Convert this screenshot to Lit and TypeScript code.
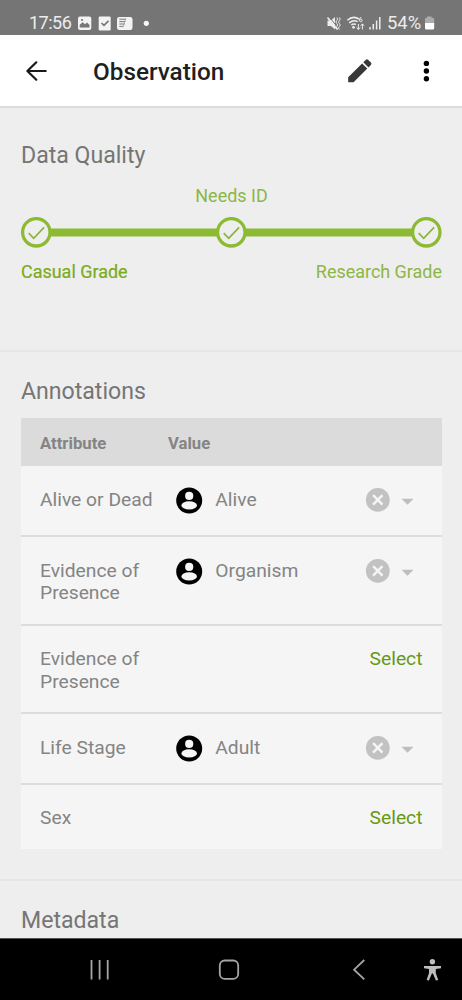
import { LitElement, html, css, svg, nothing } from "lit";
import { customElement } from "lit/decorators.js";

interface Annotation {
  attribute: string;
  value?: string;
  height: number;
}

const annotations: Annotation[] = [
  { attribute: "Alive or Dead", value: "Alive", height: 71 },
  { attribute: "Evidence of Presence", value: "Organism", height: 88.5 },
  { attribute: "Evidence of Presence", height: 88.5 },
  { attribute: "Life Stage", value: "Adult", height: 70.5 },
  { attribute: "Sex", height: 64.5 },
];

const step = (cx: number) => svg`
  <circle cx=${cx} cy="15.3" r="13.7" fill="#eee" stroke="#8cbb33" stroke-width="3.3"></circle>
  <path d="M${cx - 7.6} 16.2l5 5.1L${cx + 7.8} 10.3" fill="none" stroke="#8cb33d" stroke-width="1.7"></path>`;

@customElement("status-bar")
class StatusBar extends LitElement {
  static styles = css`
    :host { display: flex; height: 35px; background: #757575; color: #ececec; box-sizing: border-box;
      padding: 11px 26px 0 29px; justify-content: space-between; font-size: 18px; line-height: 24px; }
    .group { display: flex; }
    .left-icons { margin-left: 4px; }
    .time { letter-spacing: -0.5px; white-space: nowrap; width: 44px; }
    .battery { margin-left: 5px; width: 36px; font-size: 18.4px; white-space: nowrap; }
    svg { display: block; flex: none; }
  `;
  render() {
    return html`
      <div class="group">
        <span class="time">17:56</span>
        <svg class="left-icons" width="75" height="24" viewBox="77 11 75 24">
          <rect x="78" y="16.5" width="13.3" height="13.5" rx="2" fill="#f3f3f3"></rect>
          <path d="M79.7 27.5v-2.8l3-2.5 2.3 2 2-1.6 2.5 2.4v2.5z" fill="#777"></path>
          <circle cx="82" cy="20" r="1.1" fill="#777"></circle>
          <rect x="98.7" y="16.5" width="12" height="14" rx="1.2" fill="#f3f3f3"></rect>
          <path d="M101.5 23l2.5 2.4 4.5-4.5" fill="none" stroke="#777" stroke-width="1.7"></path>
          <rect x="117" y="17" width="15.5" height="13" rx="2.3" fill="#f3f3f3"></rect>
          <path d="M119.3 19.2h6.5M119.3 21.6h5.8M119.3 24h5M119.3 26.4h3.5" stroke="#777" stroke-width="1"></path>
          <path d="M125.8 18.5l-2.7 8.7" stroke="#999" stroke-width=".8"></path>
          <circle cx="146.3" cy="23.3" r="2.6" fill="#f6f6f6"></circle>
        </svg>
      </div>
      <div class="group">
        <svg width="56" height="24" viewBox="326 11 56 24" fill="none" stroke="#ededed">
          <path d="M327.5 20.5h3.5l4-3.5v12.5l-4-3.5h-3.5z" fill="#ededed" stroke="none"></path>
          <path d="M329.5 17.2l9 11.3" stroke="#757575" stroke-width="1"></path>
          <path d="M327.5 17.5l10.2 12" stroke-width="1.6"></path>
          <path d="M336.8 17.5q1.8 1.5 0 3t0 3 0 3 0 3M339.4 17.5q1.8 1.5 0 3t0 3 0 3 0 3" stroke-width="1"></path>
          <path d="M347.3 20.2q5.8-5 11.8-1.2M349.2 22.8q4.4-3.5 8.4-1.2M351.3 25q2.2-1.8 4.6-.5" stroke-width="1.5"></path>
          <circle cx="353.5" cy="27.3" r="1.4" fill="#ededed" stroke="none"></circle>
          <path d="M361.2 17q-2 1.7-1.6 3.4" stroke-width="1"></path>
          <circle cx="360.8" cy="20.4" r="1.3" stroke-width="1"></circle>
          <path d="M358.4 24v5.3M356.7 27.5l1.7 2 1.7-2M362.4 29.5V24M360.7 25.8l1.7-2 1.7 2" stroke-width="1"></path>
          <path d="M370 27v2.5M373.3 24v5.5M376.6 20.5v9" stroke-width="1.5"></path>
          <path d="M379.8 17v12.5" stroke-width="1.5"></path>
        </svg>
        <span class="battery">54%</span>
        <svg width="13" height="24" viewBox="423 11 13 24">
          <path d="M427 16.5h4.5v1.3h1.2q1.5 0 1.5 1.5V23H425v-3.7q0-1.5 1.5-1.5h.5z" fill="#acacac"></path>
          <path d="M425 23h9.2v5q0 1.5-1.5 1.5h-6.2q-1.5 0-1.5-1.5z" fill="#fff"></path>
        </svg>
      </div>`;
  }
}

@customElement("title-bar")
class TitleBar extends LitElement {
  static styles = css`
    :host { display: grid; grid-template-columns: 93px 1fr 73px 42px; align-items: center; height: 73px;
      box-sizing: border-box; background: #fff; border-bottom: 2px solid #dcdcdc; }
    .back { margin-left: 26px; }
    .title { font-size: 24.3px; font-weight: 500; color: #1f1f1f; line-height: 28px; padding-top: 3px; }
    svg { display: block; }
  `;
  render() {
    return html`
      <svg class="back" width="22" height="22" viewBox="26 60 22 22" fill="none" stroke="#191919" stroke-width="2.2" stroke-linecap="round" stroke-linejoin="round">
        <path d="M45.7 71H27.8M36.3 62.3L27.4 71l8.9 8.7"></path>
      </svg>
      <span class="title">Observation</span>
      <svg width="26" height="26" viewBox="347 58 26 26" fill="#383838">
        <path d="M348.2 82.3v-5L362.1 63.4l5.2 5.2-13.7 13.7z"></path>
        <path d="M363.3 62.2l2.3-2.3q1.3-1.3 2.7 0l2.6 2.6q1.2 1.3 0 2.5l-2.4 2.4z"></path>
      </svg>
      <svg width="12" height="24" viewBox="420.2 59 12 24" fill="#000">
        <circle cx="426.6" cy="63.4" r="2.7"></circle><circle cx="426.6" cy="71" r="2.7"></circle><circle cx="426.6" cy="78.8" r="2.7"></circle>
      </svg>`;
  }
}

@customElement("data-quality")
class DataQuality extends LitElement {
  static styles = css`
    :host { display: block; height: 244px; box-sizing: border-box; padding: 34px 20px 0 21px; border-bottom: 2px solid #e6e6e6; }
    .heading { font-size: 23.1px; line-height: 27px; color: #757575; }
    .needs { font-size: 17.97px; line-height: 23px; text-align: center; color: #8cb645; margin-top: 15px; }
    .track { display: block; margin-top: 10px; }
    .grades { display: flex; justify-content: space-between; margin-top: 12px; font-size: 17.97px; line-height: 23px; color: #8cb645; }
    .current { color: #7aac18; -webkit-text-stroke: .2px #7aac18; }
  `;
  render() {
    return html`
      <div class="heading">Data Quality</div>
      <div class="needs">Needs ID</div>
      <svg class="track" width="421" height="31" viewBox="0 0 421 31">
        <path d="M15 15.5h391" stroke="#8cbb33" stroke-width="8"></path>
        ${step(15.3)}${step(210.3)}${step(405.3)}
      </svg>
      <div class="grades"><span class="current">Casual Grade</span><span>Research Grade</span></div>`;
  }
}

@customElement("annotation-table")
class AnnotationTable extends LitElement {
  static styles = css`
    :host { display: block; height: 529px; box-sizing: border-box; padding: 26px 20px 0 21px; border-bottom: 2px solid #e6e6e6; }
    .heading { font-size: 23.1px; line-height: 27px; color: #757575; }
    .table { margin-top: 13px; background: #f5f5f5; color: #848484; font-size: 19.25px; line-height: 22.7px; }
    .head, .row { display: grid; grid-template-columns: 127px 1fr auto; padding-left: 19px; box-sizing: border-box; }
    .head { height: 48px; background: #dbdbdb; align-items: center; font-size: 16.7px; font-weight: 700; color: #848484; padding-top: 4px; }
    .head span + span { padding-left: 1px; }
    .row { padding-top: 22.6px; border-bottom: 2px solid #dcdcdc; }
    .row:last-child { border-bottom: 0; }
    .value { display: flex; padding-left: 7.3px; gap: 12px; }
    .user { margin-top: -2.6px; }
    .select { color: #669914; padding-right: 19.5px; }
    .actions { margin: -0.9px 28px 0 0; }
    svg { display: block; }
  `;
  row(a: Annotation) {
    return html`<div class="row" style="height:${a.height}px">
      <div>${a.attribute}</div>
      <div class="value">${a.value
        ? html`<svg class="user" width="29" height="29" viewBox="0 0 29 29">
              <circle cx="15.2" cy="14.5" r="13" fill="#000"></circle>
              <circle cx="15.2" cy="9.9" r="4.1" fill="#f5f5f5"></circle>
              <ellipse cx="15.2" cy="19.4" rx="7.8" ry="4.2" fill="#f5f5f5"></ellipse>
            </svg><span>${a.value}</span>`
        : nothing}</div>
      ${a.value
        ? html`<svg class="actions" width="49" height="24" viewBox="0 0 49 24">
              <circle cx="12.8" cy="11.9" r="11.9" fill="#c2c2c2"></circle>
              <path d="M8.1 7.2l9.4 9.4M17.5 7.2l-9.4 9.4" stroke="#f5f5f5" stroke-width="2.5"></path>
              <path d="M36.5 10.7h12l-6 6z" fill="#bebebe"></path>
            </svg>`
        : html`<span class="select">Select</span>`}
    </div>`;
  }
  render() {
    return html`
      <div class="heading">Annotations</div>
      <div class="table">
        <div class="head"><span>Attribute</span><span>Value</span></div>
        ${annotations.map((a) => this.row(a))}
      </div>`;
  }
}

@customElement("nav-bar")
class NavBar extends LitElement {
  static styles = css`
    :host { display: block; height: 62px; background: #000; border-top: 1px solid #555; box-sizing: border-box; }
    svg { display: block; }
  `;
  render() {
    return html`<svg width="462" height="61" viewBox="0 939 462 61" fill="none" stroke="#a6a6a6">
      <path d="M91.5 960v19.5M99.6 960v19.5M107.7 960v19.5" stroke-width="1.8"></path>
      <rect x="219.8" y="960.5" width="18.4" height="18.4" rx="5" stroke-width="1.8"></rect>
      <path d="M364.3 960l-10.2 9.7 10.2 9.7" stroke-width="1.8"></path>
      <g fill="#bdbdbd" stroke="none">
        <circle cx="432.4" cy="961.8" r="2.7"></circle>
        <path d="M424 966h17v2.2l-5.2.7v4l2.4 7.2-2.3.5-3-7h-1l-3 7-2.3-.5 2.4-7.2v-4l-5-.7z"></path>
      </g>
    </svg>`;
  }
}

@customElement("app-root")
class AppRoot extends LitElement {
  static styles = css`
    :host { display: flex; flex-direction: column; width: 462px; height: 1000px; overflow: hidden;
      background: #eee; font-family: Roboto, sans-serif; }
    .metadata { flex: 1; min-height: 0; overflow: hidden; box-sizing: border-box; padding: 26px 21px 0; font-size: 23.1px; line-height: 27px; color: #757575; }
    status-bar, title-bar, data-quality, annotation-table, nav-bar { flex: none; }
  `;
  render() {
    return html`
      <status-bar></status-bar>
      <title-bar></title-bar>
      <data-quality></data-quality>
      <annotation-table></annotation-table>
      <div class="metadata">Metadata</div>
      <nav-bar></nav-bar>`;
  }
}
